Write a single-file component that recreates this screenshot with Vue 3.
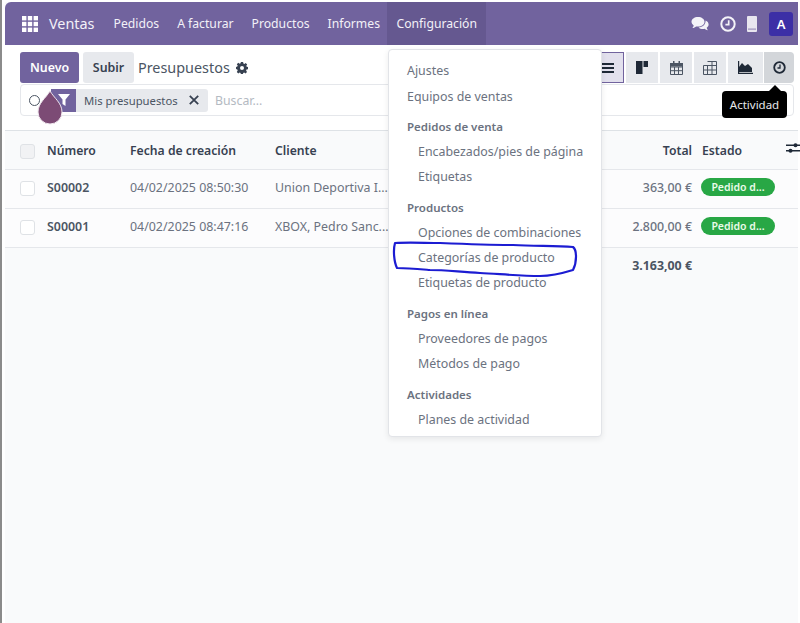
<template>
  <div class="screen">
    <div class="app">
      <header class="navbar">
        <svg class="apps" viewBox="0 0 16 16" width="16" height="16">
          <g fill="#fff">
            <rect v-for="c in appCells" :key="c.x + '-' + c.y" :x="c.x" :y="c.y" width="4.400" height="4.400" />
          </g>
        </svg>
        <span class="brand">Ventas</span>
        <a v-for="item in navItems" :key="item" class="nav-link" :class="{ open: item === 'Configuración' }">{{ item }}</a>
        <div class="systray">
          <svg width="18" height="16" viewBox="0 0 18 16">
            <path fill="#f4f3f8" d="M7 1c3.700 0 6.500 2.100 6.500 4.800S10.700 10.600 7 10.600c-.700 0-1.300-.1-1.900-.2C4.200 11.200 2.900 11.800 1.400 12c.700-.8 1.200-1.700 1.300-2.600C1.300 8.500.5 7.200.5 5.800.5 3.100 3.300 1 7 1z" />
            <path fill="#f4f3f8" d="M14.600 4.600c1.800.8 3 2.200 3 3.900 0 1.300-.7 2.400-1.900 3.200.1.900.6 1.800 1.200 2.500-1.300-.2-2.500-.7-3.300-1.400-.5.100-1 .2-1.600.2-1.800 0-3.400-.6-4.400-1.600 3.900-.1 7.100-2.500 7-6.800z" />
          </svg>
          <svg width="16" height="16" viewBox="0 0 16 16">
            <circle cx="8" cy="8" r="6.700" fill="none" stroke="#f4f3f8" stroke-width="2" />
            <path fill="none" stroke="#f4f3f8" stroke-width="1.700" d="M8.700 4.200v4.500H5.400" />
          </svg>
          <svg width="10" height="16" viewBox="0 0 10 16">
            <path fill="#e8e6ef" d="M1 0h8a1 1 0 0 1 1 1v14a1 1 0 0 1-1 1H1a1 1 0 0 1-1-1V1a1 1 0 0 1 1-1z" />
            <rect x="1" y="12.500" width="8" height="1.200" fill="#9c91bb" />
          </svg>
          <span class="avatar">A</span>
        </div>
      </header>

      <section class="control-panel">
        <div class="panel-top">
          <button class="btn primary">Nuevo</button>
          <button class="btn secondary">Subir</button>
          <span class="crumb">Presupuestos</span>
          <svg class="gear" width="12" height="12" viewBox="0 0 12 12">
            <path fill="#374151" fill-rule="evenodd" d="M4.900 0h2.200l.3 1.500 1 .4L9.700 1l1.500 1.500-.9 1.300.4 1 1.300.3v2.200l-1.500.3-.4 1 .9 1.300-1.500 1.500-1.300-.9-1 .4-.3 1.500H4.900l-.3-1.500-1-.4-1.300.9L.8 9.900l.9-1.300-.4-1L0 7.100V4.900l1.300-.3.4-1-.9-1.300L2.300.8l1.300.9 1-.4zM6 4a2 2 0 1 0 0 4 2 2 0 0 0 0-4z" />
          </svg>
          <div class="views">
            <button class="view active">
              <svg width="14" height="12" viewBox="0 0 14 12"><path fill="#1f2937" d="M0 1h14v2H0zM0 5h14v2H0zM0 9h14v2H0z" /></svg>
            </button>
            <button class="view">
              <svg width="12" height="13" viewBox="0 0 12 13"><path fill="#1f2937" d="M0 0h6.500v13H0zM7.500 0H12v6H7.500z" /></svg>
            </button>
            <button class="view">
              <svg width="13" height="14" viewBox="0 0 13 14"><path fill="none" stroke="#4b5563" d="M.5 2.500h12v11H.5zM.5 6h12M4.500 6v7.500M8.500 6v7.500M.5 9.700h12" /><path fill="#4b5563" d="M0 2h13v3.500H0zM3 0h1.500v2H3zM8.500 0H10v2H8.500z" /></svg>
            </button>
            <button class="view">
              <svg width="14" height="14" viewBox="0 0 14 14"><path fill="none" stroke="#4b5563" d="M4.500.5h9v13H.5v-9h13M.5 9h13M4.500 4.500v9M9 .5v13" /></svg>
            </button>
            <button class="view wide">
              <svg width="15" height="13" viewBox="0 0 15 13"><path fill="#1f2937" d="M1 11V6l3-4 3 3 3-2 4 4v4z" /><path fill="none" stroke="#1f2937" stroke-width="1.200" d="M.6 0v12.400H15" /></svg>
            </button>
            <button class="view current">
              <svg width="13" height="13" viewBox="0 0 13 13">
                <circle cx="6.500" cy="6.500" r="5.300" fill="none" stroke="#1f2937" stroke-width="1.800" />
                <path fill="none" stroke="#1f2937" stroke-width="1.300" d="M7 3.500V7H4.500" />
              </svg>
            </button>
          </div>
        </div>
        <div class="search">
          <span class="ring"></span>
          <span class="facet-icon">
            <svg width="12" height="12" viewBox="0 0 12 12"><path fill="#fff" d="M0 0h12L7.500 5.500V12l-3-2V5.500z" /></svg>
          </span>
          <span class="facet">
            Mis presupuestos
            <svg width="10" height="10" viewBox="0 0 10 10"><path stroke="#374151" stroke-width="1.800" d="M.8.800l8.400 8.400M9.200.800L.8 9.200" /></svg>
          </span>
          <span class="placeholder">Buscar...</span>
        </div>
      </section>

      <table class="list">
        <colgroup>
          <col class="c-check" /><col class="c-num" /><col class="c-date" /><col class="c-client" />
          <col /><col class="c-total" /><col class="c-state" /><col class="c-opt" />
        </colgroup>
        <thead>
          <tr>
            <th><span class="check head"></span></th>
            <th>Número</th>
            <th>Fecha de creación</th>
            <th>Cliente</th>
            <th></th>
            <th class="num">Total</th>
            <th>Estado</th>
            <th class="opt">
              <svg width="14" height="12" viewBox="0 0 14 12"><path fill="#1f2937" d="M0 2.500h8v1.500H0zM11 2.500h3V4h-3zM0 8h3v1.500H0zM6 8h8v1.500H6z" /><circle cx="9.500" cy="3.200" r="2" fill="#1f2937" /><circle cx="4.500" cy="8.800" r="2" fill="#1f2937" /></svg>
            </th>
          </tr>
        </thead>
        <tbody>
          <tr v-for="row in rows" :key="row.number">
            <td><span class="check"></span></td>
            <td class="strong">{{ row.number }}</td>
            <td>{{ row.date }}</td>
            <td>{{ row.client }}</td>
            <td></td>
            <td class="num amount">{{ row.total }}</td>
            <td><span class="badge">Pedido d...</span></td>
            <td></td>
          </tr>
        </tbody>
        <tfoot>
          <tr>
            <td colspan="5"></td>
            <td class="num sum">3.163,00 €</td>
            <td colspan="2"></td>
          </tr>
        </tfoot>
      </table>
    </div>

    <nav class="menu">
      <div v-for="group in menu" :key="group.title || 'root'" class="menu-group">
        <div v-if="group.title" class="menu-title">{{ group.title }}</div>
        <a v-for="link in group.links" :key="link" class="menu-item" :class="{ sub: group.title }">{{ link }}</a>
      </div>
    </nav>

    <div class="tooltip">Actividad</div>

    <svg class="scribble" width="800" height="623" viewBox="0 0 800 623">
      <path fill="none" stroke="#1c1cd2" stroke-width="2.200" stroke-linejoin="round" d="M395 243C410 242 425 243 440 243C465 244 490 245 513 245C535 246 555 246 573 247C577 250 577 262 573 270C560 274 550 276 540 276C520 276 500 274 480 273C460 272 445 270 430 270C418 269 407 268 397 268C394 262 393 250 395 243Z" />
    </svg>
    <svg class="drop" width="28" height="36" viewBox="0 0 28 36">
      <path fill="#7c4b75" stroke="#efe6ee" stroke-width="1" d="M14 1C18 8 26 13 26 22A12 12 0 0 1 2 22C2 13 10 8 14 1Z" />
    </svg>
  </div>
</template>

<script setup>
const appCells = [0, 5.8, 11.6].flatMap((y) => [0, 5.8, 11.6].map((x) => ({ x, y })))

const navItems = ['Pedidos', 'A facturar', 'Productos', 'Informes', 'Configuración']

const rows = [
  { number: 'S00002', date: '04/02/2025 08:50:30', client: 'Union Deportiva I...', total: '363,00 €' },
  { number: 'S00001', date: '04/02/2025 08:47:16', client: 'XBOX, Pedro Sanc...', total: '2.800,00 €' },
]

const menu = [
  { title: '', links: ['Ajustes', 'Equipos de ventas'] },
  { title: 'Pedidos de venta', links: ['Encabezados/pies de página', 'Etiquetas'] },
  { title: 'Productos', links: ['Opciones de combinaciones', 'Categorías de producto', 'Etiquetas de producto'] },
  { title: 'Pagos en línea', links: ['Proveedores de pagos', 'Métodos de pago'] },
  { title: 'Actividades', links: ['Planes de actividad'] },
]
</script>

<style>
body {
  background: #fff;
}
</style>

<style scoped>
.screen {
  position: relative;
  width: 800px;
  height: 623px;
  overflow: hidden;
  box-sizing: border-box;
  padding: 2px 2px 0 3px;
  border-left: 2px solid #8b8b8b;
  font-family: "Noto Sans", "Open Sans", sans-serif;
  font-size: 12.400px;
  color: #4b5563;
  background: #fff;
}

.app {
  height: 100%;
  background: #f9fafb;
}

.navbar {
  display: flex;
  align-items: center;
  height: 43px;
  padding-left: 17px;
  background: #71639e;
  color: #f3f1f8;
  border-top-left-radius: 6px;
}

.apps {
  margin-right: 11px;
}

.brand {
  font-size: 14.400px;
  margin-right: 10px;
}

.nav-link {
  display: flex;
  align-items: center;
  height: 100%;
  padding: 0 9px;
  font-size: 12.200px;
}

.nav-link.open {
  margin-left: -1.500px;
  background: #655890;
}

.systray {
  display: flex;
  align-items: center;
  margin-left: auto;
  gap: 11px;
  padding-right: 5px;
}

.avatar {
  width: 24px;
  height: 24px;
  margin-left: 1px;
  border-radius: 3px;
  background: #3c2fa6;
  color: #fff;
  font-size: 13px;
  font-weight: 600;
  text-align: center;
  line-height: 24px;
}

.control-panel {
  padding: 7px 4px 14px 15px;
  background: #fff;
  border-bottom: 1px solid #dee2e6;
}

.panel-top {
  display: flex;
  align-items: center;
  height: 31px;
}

.btn {
  height: 31px;
  border: none;
  border-radius: 3px;
  font-family: inherit;
  font-size: 12.400px;
  font-weight: 600;
}

.primary {
  width: 59px;
  background: #71639e;
  color: #fff;
  margin-right: 4px;
}

.secondary {
  width: 51px;
  background: #e7e9ed;
  color: #374151;
  margin-right: 4px;
}

.crumb {
  font-size: 14.400px;
  color: #4b5563;
  margin-right: 6px;
}

.views {
  display: flex;
  margin-left: auto;
  gap: 2px;
}

.view {
  display: flex;
  align-items: center;
  justify-content: center;
  width: 32px;
  height: 31px;
  padding: 0;
  border: none;
  background: #e7e9ed;
}

.view.wide {
  width: 35px;
  margin-right: -1px;
}

.view.active {
  width: 34px;
  background: #e2e0ed;
  border: 1px solid #71639e;
}

.view.current {
  width: 30px;
  background: #d3d6da;
  border-radius: 0 4px 4px 0;
}

.search {
  display: flex;
  align-items: center;
  height: 32px;
  margin-top: 1px;
  border: 1px solid #e5e7eb;
  border-radius: 4px;
  box-sizing: border-box;
}

.ring {
  width: 9px;
  height: 9px;
  margin-left: 8px;
  margin-right: 11px;
  border: 1.800px solid #4b5563;
  border-radius: 50%;
}

.facet-icon {
  display: flex;
  align-items: center;
  justify-content: center;
  width: 25px;
  height: 23px;
  background: #71639e;
}

.facet {
  display: flex;
  align-items: center;
  justify-content: space-between;
  width: 115px;
  height: 23px;
  padding: 0 9px 0 8px;
  background: #e7e9ed;
  border-radius: 0 3px 3px 0;
  font-size: 11.300px;
  color: #4b5563;
}

.placeholder {
  margin-left: 7px;
  font-size: 12.300px;
  color: #b4bac2;
}

.list {
  width: 100%;
  table-layout: fixed;
  border-collapse: collapse;
}

.c-check {
  width: 32px;
}

.c-num {
  width: 83px;
}

.c-date {
  width: 145px;
}

.c-client {
  width: 125px;
}

.c-total {
  width: 100px;
}

.c-state {
  width: 78px;
}

.c-opt {
  width: 28px;
}

.list th,
.list td {
  padding: 0 5px 0 10px;
  text-align: left;
  white-space: nowrap;
  border-bottom: 1px solid #e5e7eb;
  box-sizing: border-box;
}

.list th {
  height: 38px;
  padding-top: 2px;
  font-size: 12.200px;
  font-weight: 600;
  color: #374151;
}

.list tbody td {
  height: 39px;
  padding-bottom: 2px;
  color: #6b7280;
  background: #fcfcfd;
}

.list tfoot td {
  height: 38px;
  padding-bottom: 2px;
  border-bottom: none;
}

.list .num {
  text-align: right;
  padding-right: 0;
}

.list td.strong {
  font-weight: 600;
  color: #4b5563;
}

.list td.amount {
  font-weight: 500;
}

.list td.sum {
  font-weight: 700;
  color: #4b5563;
}

.list th.opt {
  padding: 0;
  text-align: right;
}

.list th.opt svg {
  margin-right: -2px;
}

.check {
  display: inline-block;
  width: 13px;
  height: 13px;
  margin-left: 5px;
  border: 1px solid #dfe2e6;
  border-radius: 3px;
  background: #fff;
  vertical-align: middle;
}

.check.head {
  background: #f1f2f4;
}

.list th:first-child,
.list td:first-child {
  padding-left: 10px;
  padding-right: 0;
}

.badge {
  display: inline-block;
  width: 74px;
  height: 18px;
  margin-left: -1px;
  margin-bottom: 2px;
  border-radius: 9px;
  background: #28a745;
  color: #eafbe9;
  font-size: 10.500px;
  font-weight: 600;
  line-height: 18px;
  text-align: center;
  vertical-align: middle;
}

.menu {
  position: absolute;
  left: 386px;
  top: 49px;
  width: 214px;
  height: 388px;
  box-sizing: border-box;
  padding-top: 8px;
  background: #fff;
  border: 1px solid #e2e4e8;
  border-radius: 4px;
  box-shadow: 0 2px 6px rgba(0, 0, 0, 0.08);
}

.menu-group {
  margin-bottom: 7px;
}

.menu-group:first-child {
  margin-bottom: 6px;
}

.menu-group:first-child .menu-item {
  height: 25.500px;
  line-height: 25.500px;
}

.menu-title {
  height: 24px;
  padding-left: 18px;
  font-size: 11.500px;
  font-weight: 600;
  line-height: 24px;
  color: #6b7280;
}

.menu-item {
  display: block;
  height: 25px;
  padding-left: 18px;
  line-height: 25px;
  color: #6b7280;
}

.menu-item.sub {
  padding-left: 29px;
}

.tooltip {
  position: absolute;
  left: 720px;
  top: 91px;
  width: 65px;
  height: 27px;
  border-radius: 4px;
  background: #000;
  color: #e5e7eb;
  font-size: 11.500px;
  line-height: 27px;
  text-align: center;
}

.tooltip::before {
  content: "";
  position: absolute;
  top: -6px;
  right: 6px;
  border: 6px solid transparent;
  border-top: none;
  border-bottom-color: #000;
}

.scribble {
  position: absolute;
  left: -2px;
  top: 0;
  pointer-events: none;
}

.drop {
  position: absolute;
  left: 34px;
  top: 90px;
}
</style>
